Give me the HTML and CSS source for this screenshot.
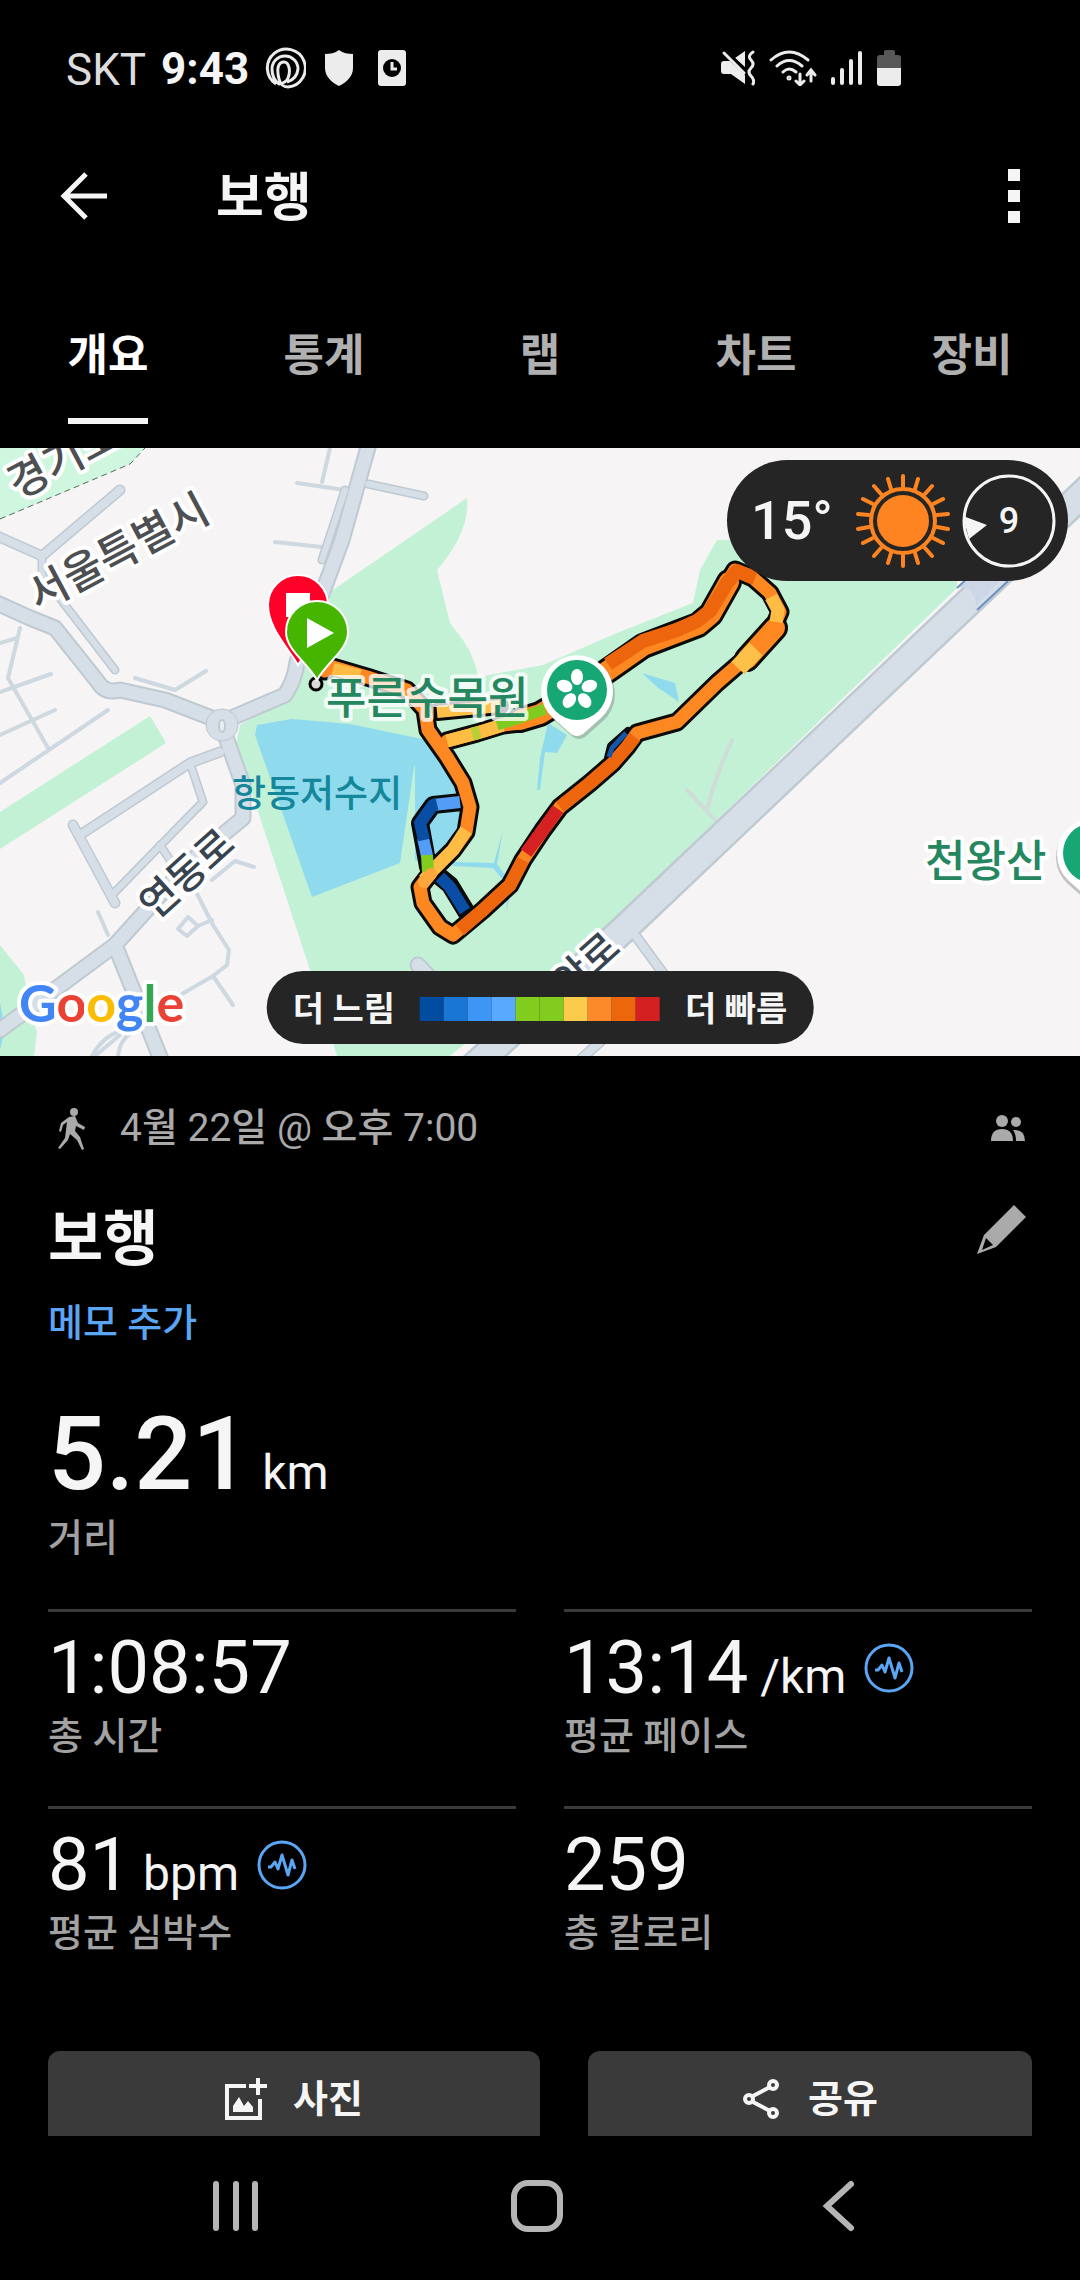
FILE: index.html
```html
<!DOCTYPE html>
<html lang="ko">
<head>
<meta charset="utf-8">
<meta name="viewport" content="width=device-width, initial-scale=1">
<title>보행</title>
<link rel="stylesheet" href="styles.css">
</head>
<body>
<header>
  <div class="status">
    <div class="status-left">
      <span class="carrier">SKT</span>
      <time class="clock">9:43</time>
      <svg class="st-rings" width="42" height="42" viewBox="0 0 42 42" fill="none" stroke="#ececec" stroke-width="3"><path d="M12 37A19 19 0 1 1 24 40Q17 40 15 32C12 20 15 15 20 15S27 24 24 31Q22 36 15 37Q8 32 8 22A13 13 0 0 1 34 22Q33 32 23 35"/></svg>
      <svg class="st-shield" width="28" height="36" viewBox="0 0 28 36" fill="#ececec"><path d="M14 0C18 3 23 4 28 4V18C28 26 22 32 14 36C6 32 0 26 0 18V4C5 4 10 3 14 0Z"/></svg>
      <svg width="28" height="36" viewBox="0 0 28 36"><rect width="28" height="36" rx="3" fill="#ececec"/><circle cx="14" cy="18" r="9"/><path d="M14 12V19H19" fill="none" stroke="#ececec" stroke-width="3"/></svg>
    </div>
    <div class="status-right">
      <svg width="34" height="36" viewBox="0 0 34 36" fill="#ececec"><path d="M0 14Q0 11 3 11H9L24 25V34L10 24H3Q0 24 0 21ZM14 8L24 1V17Z"/><path d="M5 1L26 22" stroke="#000" stroke-width="3"/><path d="M3 3L23 23" stroke="#ececec" stroke-width="3" stroke-linecap="round"/><path d="M32 2Q26 6 30 10T30 18T30 26T32 34" fill="none" stroke="#ececec" stroke-width="3" stroke-linecap="round"/></svg>
      <svg width="48" height="36" viewBox="0 0 48 36" fill="none" stroke="#ececec" stroke-width="3" stroke-linecap="round"><path d="M2 10Q20 -6 39 10M8 16Q20 5 33 16M14 22Q20 16 27 22M31 24V34M27 31L31 35L35 31M42 31V21M38 25L42 20L46 25"/><circle cx="20" cy="28" r="1"/></svg>
      <svg width="32" height="36" viewBox="0 0 32 36" stroke="#ececec" stroke-width="4" stroke-linecap="round"><path d="M2 29V33M11 20V33M20 11V33M29 3V33"/></svg>
      <svg class="st-battery" width="24" height="36" viewBox="0 0 24 36"><path d="M7 5V2Q7 0 9 0H16Q18 0 18 2V5H21Q24 5 24 8V18H0V8Q0 5 3 5Z" fill="#575757"/><path d="M0 18H24V33Q24 36 21 36H3Q0 36 0 33Z" fill="#ececec"/></svg>
    </div>
  </div>
  <div class="appbar">
    <button class="icon-btn" aria-label="뒤로"><svg width="48" height="48" viewBox="0 0 48 48" fill="none" stroke="#f5f5f5" stroke-width="5"><path d="M47 24H4M26 2L4 24L26 46"/></svg></button>
    <h1>보행</h1>
    <button class="icon-btn" aria-label="더보기"><svg width="12" height="54" viewBox="0 0 12 54" fill="#f5f5f5"><path d="M0 0H12V12H0ZM0 21H12V33H0ZM0 42H12V54H0Z"/></svg></button>
  </div>
  <nav class="tabs">
    <a class="active" href="#overview">개요</a>
    <a href="#stats">통계</a>
    <a href="#laps">랩</a>
    <a href="#charts">차트</a>
    <a href="#gear">장비</a>
  </nav>
</header>

<main id="overview">
  <section class="map">
    <svg class="map-canvas" viewBox="0 448 1080 608" preserveAspectRatio="xMidYMid slice">
      <rect y="448" width="1080" height="608" fill="#f6f4f5"/>
      <g fill="#c2f1d5">
        <path fill="#cff7df" d="M0 448H145L130 464L0 519Z"/>
        <path d="M0 812L150 716L166 743L0 849Z"/>
        <path d="M0 945L24 975L30 1012L37 1032L34 1056H0Z"/>
        <path d="M330 592L467 498Q470 532 437 570L450 623L463 640Q476 660 478 677L543 665L617 633L693 603L700 570L717 540H957V588L603 930L450 1056H337L310 970L236 744L240 725L290 697L300 650Z"/>
      </g>
      <g fill="#90daee">
        <path d="M255 735L257 725L292 719L350 724L427 740L414 767L400 863L312 897Z"/>
        <path d="M415 738L440 742L462 790L466 835L430 866L415 860Z"/>
        <path d="M642 673L675 683L679 702L657 687Z"/>
        <path d="M548 723L567 735L557 753L545 752L540 790H537L540 758Z"/>
        <path d="M453 862L494 863L503 830L497 864L512 885L506 913L508 886L493 868L453 866Z"/>
        <path d="M0 1003L5 1030L0 1050Z"/>
      </g>
      <path d="M0 519L130 464L145 448" fill="none" stroke="#526b60" stroke-width="1" stroke-dasharray="6 4"/>
      <g fill="none" stroke="#ced8e1" stroke-width="4" stroke-linecap="round" stroke-linejoin="round">
        <path d="M20 628L8 678L48 748M0 643L17 638M0 692L51 674M0 735L55 710M0 783L108 710M135 678L175 690L206 671M330 448L322 482M297 483L345 490M275 542L322 547M98 912L108 935M195 890L213 925L229 950L227 965L213 976L182 994M213 976L233 1005M188 917L198 926L187 936L178 929ZM198 926L212 920M212 880L235 861L254 867M95 1056L120 1035"/>
        <path stroke="#cfdcd9" d="M732 740Q712 785 708 808M687 790L717 822"/>
      </g>
      <g fill="none" stroke-linecap="round" stroke-linejoin="round">
        <g id="streets" stroke="#bfc9d1">
          <path class="lane-s" d="M42 556V575L115 670M368 484L424 496M190 763L203 802L195 810L112 895M160 845L170 860M345 490L322 560"/>
          <path class="lane-m" d="M-5 535L42 556L120 490M220 752L190 763L80 835M73 825L115 903M635 935L668 980L580 1060"/>
          <path class="lane-l" d="M-5 602L30 618L55 628L98 682Q105 694 120 690L165 700L222 722L285 695Q295 680 297 662L342 540L370 440M222 726L243 785V818L190 862L115 945L0 1030M115 945L162 1062M418 965L430 978"/>
          <path class="lane-xl" d="M1090 487L625 928L470 1070"/>
        </g>
        <g stroke="#d6dfe7">
          <path stroke-width="6" d="M42 556V575L115 670M368 484L424 496M190 763L203 802L195 810L112 895M160 845L170 860M345 490L322 560"/>
          <path stroke-width="8" d="M-5 535L42 556L120 490M220 752L190 763L80 835M73 825L115 903M635 935L668 980L580 1060"/>
          <path stroke-width="13" d="M-5 602L30 618L55 628L98 682Q105 694 120 690L165 700L222 722L285 695Q295 680 297 662L342 540L370 440M222 726L243 785V818L190 862L115 945L0 1030M115 945L162 1062M418 965L430 978"/>
          <path stroke-width="25" d="M1090 487L625 928L470 1070"/>
          <path stroke-width="4" stroke="#ced8e1" d="M92 1056Q104 1034 125 1030M118 1056Q120 1040 130 1034"/>
        </g>
      </g>
      <path d="M958 587L975 575H1006L976 606Q976 588 958 587Z" fill="#ccd6e6"/>
      <path d="M957 588L970 576M977 610L1008 581" stroke="#6f90c4" stroke-width="2"/>
      <circle cx="222" cy="725" r="16" fill="#d6dfe7" stroke="#bfc9d1"/>
      <ellipse cx="222" cy="726" rx="3" ry="6" fill="#e9eef1" stroke="#bfc9d1" stroke-width="2"/>

      <g fill="none" stroke-linejoin="round" stroke-linecap="round">
        <g stroke="#0b0b0b">
          <path stroke-width="18" d="M462 802L433 805L420 823L425 850L428 867L450 885L467 913M437 712L500 706"/>
          <path stroke-width="19" d="M325 671L333 667L367 677L407 690L425 710L428 730L447 757L463 783L470 807L466 832L453 850L433 870L420 887L423 903L440 927L453 935L483 910L510 885L523 860L543 830L560 807L590 783L613 763L627 747L637 733L677 722L717 683L747 657L773 628L780 612L770 593L753 578L735 570L727 583L713 610L700 623L677 632L643 643L613 663L577 690L537 717L520 723L503 725L477 733L447 741"/>
          <path stroke-width="26" d="M729 582L711 614L698 625L677 633L643 646L613 667L577 692L540 714L520 720M775 628L747 659"/>
          <path stroke-width="8" d="M628 731L611 746L608 758"/>
        </g>
        <g stroke="#fd8821" stroke-width="13">
          <path d="M325 671L333 667L367 677L407 690L425 710L428 730L447 757L463 783L470 807L466 832L453 850L433 870L420 887L423 903L440 927L453 935L483 910L510 885L523 860L543 830L560 807L590 783L613 763L627 747L637 733L677 722L717 683L747 657L773 628L780 612L770 593L753 578L735 570L727 583M520 723L503 725L477 733L447 741"/>
          <path stroke-width="20" d="M729 582L711 614L698 625L677 633L643 646L613 667L577 692L540 714L520 720M775 628L747 659"/>
          <g stroke-linecap="butt">
            <path stroke="#fdbd45" d="M333 669L360 676M466 830L453 850L433 870L424 880M447 741L477 733L503 725M776 622L778 610L771 597"/>
            <path stroke="#fdc14a" stroke-width="18" d="M738 668L756 649"/>
            <path stroke="#ed660d" d="M460 930L483 910L510 885L523 860M560 807L590 783L613 763L627 747L635 737"/>
            <path stroke="#ed660d" stroke-width="14" d="M755 578L737 571L727 583L710 611L697 621L677 630L643 641L608 664"/>
            <path stroke="#d52121" d="M526 853L543 830L558 809"/>
            <path stroke="#7fcb21" d="M497 725L520 718L545 709" stroke-width="11"/>
            <path stroke="#b8cf35" d="M472 734L480 732"/>
          </g>
        </g>
        <g stroke-width="12" stroke-linecap="butt">
          <path stroke="#fdc14a" d="M437 712L500 706"/>
          <path stroke="#539df7" d="M460 802L433 805M423 838L427 856"/>
          <path stroke="#0a4da5" stroke-linejoin="round" d="M437 804L433 805L420 823L424 840M440 877L450 887L465 911"/>
          <path stroke="#82cc1f" d="M427 855L428 872"/>
          <path stroke="#1457aa" stroke-width="5" d="M626 733L612 748L609 757"/>
        </g>
        <path stroke="#fda63d" stroke-width="12" d="M424 882L431 874"/>
        <circle cx="316" cy="684" r="6" fill="#d9d9d9" stroke="#000" stroke-width="3"/>
      </g>

      <g font-family="Roboto, 'Noto Sans CJK KR', sans-serif" font-weight="500" stroke="#fff" stroke-width="8" stroke-linejoin="round" paint-order="stroke">
        <g font-size="43" fill="#4d4f52">
          <text transform="translate(38 612) rotate(-28)">서울특별시</text>
          <text transform="translate(18 500) rotate(-28)">경기도</text>
        </g>
        <g font-size="40" fill="#37434f">
          <text transform="translate(155 921) rotate(-42)">연동로</text>
          <text transform="translate(568 1000) rotate(-42)">안로</text>
        </g>
        <g font-size="44" fill="#25875f">
          <text x="326" y="714" stroke-opacity=".8">푸른수목원</text>
          <text x="925" y="877">천왕산</text>
        </g>
        <text x="232" y="807" font-size="37" fill="#14879b" stroke="none">항동저수지</text>
        <text x="19" y="1022" font-family="Lato, sans-serif" font-size="52" font-weight="700"><tspan fill="#4285f4">G</tspan><tspan fill="#ea4335">o</tspan><tspan fill="#fbbc04">o</tspan><tspan fill="#4285f4">g</tspan><tspan fill="#34a853">l</tspan><tspan fill="#ea4335">e</tspan></text>
      </g>

      <g id="pins">
        <path d="M298 665C288 648 268 628 268 605A30 30 0 0 1 328 605C328 628 308 648 298 665Z" fill="#ff0029" stroke="#fff" stroke-width="2"/>
        <rect x="286" y="593" width="24" height="24" fill="#fff"/>
        <path d="M317 680C307 662 286 650 286 632A31 31 0 0 1 348 632C348 650 327 662 317 680Z" fill="#45b500" stroke="#fff" stroke-width="2"/>
        <path d="M307 618V648L334 633Z" fill="#fff"/>
      </g>
      <g id="places">
        <g transform="translate(577 690)">
          <path d="M-24 28A36 36 0 1 1 24 28L6 44Q0 48 -6 44Z" fill="#777" opacity=".4" transform="translate(2 3)"/>
          <path d="M-24 28A36 36 0 1 1 24 28L6 44Q0 48 -6 44Z" fill="#fff"/>
          <circle r="30" fill="#17a775"/>
          <g fill="#fff"><ellipse cy="-13" rx="6" ry="8"/><ellipse cy="-13" rx="6" ry="8" transform="rotate(72)"/><ellipse cy="-13" rx="6" ry="8" transform="rotate(144)"/><ellipse cy="-13" rx="6" ry="8" transform="rotate(216)"/><ellipse cy="-13" rx="6" ry="8" transform="rotate(288)"/></g>
        </g>
        <g transform="translate(1093 853)">
          <path d="M-24 28A36 36 0 1 1 24 28L6 44Q0 48 -6 44Z" fill="#777" opacity=".4" transform="translate(-1 3)"/>
          <path d="M-24 28A36 36 0 1 1 24 28L6 44Q0 48 -6 44Z" fill="#fff"/>
          <circle r="30" fill="#17a775"/>
        </g>
      </g>
    </svg>

    <div class="weather">
      <span class="temp">15°</span>
      <svg width="94" height="94" viewBox="-47 -47 94 94">
        <circle r="26" fill="#fd8420"/><circle r="32" fill="none" stroke="#fd8420" stroke-width="4"/>
        <path id="rays" fill="none" stroke="#fd8420" stroke-width="4" stroke-linecap="round" d="M0 -34V-45M0 34V45M12 -32L15 -42M-12 -32L-15 -42M12 32L15 42M-12 32L-15 42M22 -27L29 -35M-22 -27L-29 -35M22 27L29 35M-22 27L-29 35M30 -17L40 -22M-30 -17L-40 -22M30 17L40 22M-30 17L-40 22M34 -6L45 -7M-34 -6L-45 -7M34 6L45 8M-34 6L-45 8"/>
      </svg>
      <span class="wind">
        <svg width="94" height="94" viewBox="-47 -47 94 94"><circle r="45" fill="none" stroke="#f5f5f5" stroke-width="3"/><path d="M-46 -5L-22 4L-40 18Z" fill="#f5f5f5"/></svg>
        <span class="wind-value">9</span>
      </span>
    </div>

    <div class="legend">
      <span>더 느림</span>
      <span class="scale"><i class="c1"></i><i class="c2"></i><i class="c3"></i><i class="c4"></i><i class="c5"></i><i class="c5"></i><i class="c6"></i><i class="c7"></i><i class="c8"></i><i class="c9"></i></span>
      <span>더 빠름</span>
    </div>
  </section>

  <section class="details">
    <div class="meta">
      <svg width="48" height="44" viewBox="0 0 48 44" fill="#aaa"><circle cx="26" cy="6" r="4"/><path d="M21 11L27 10L30 17L37 21L36 24L28 20L27 25L32 31L36 43L34 44L29 34L22 28L20 34L12 43L10 42L17 32L19 16L15 19L13 26L11 25L13 17Z"/></svg>
      <time>4<b>월</b> 22<b>일</b> @ <b>오후</b> 7:00</time>
      <svg class="people" width="36" height="28" viewBox="0 0 36 28" fill="#aaa"><circle cx="12" cy="7" r="6"/><circle cx="26" cy="8" r="5"/><path d="M1 27Q1 15 12 15T23 27ZM23 16Q35 15 35 27H26Q26 20 23 16Z"/></svg>
    </div>
    <div class="title-row">
      <h2>보행</h2>
      <button class="icon-btn" aria-label="편집"><svg width="52" height="52" viewBox="0 0 52 52"><path d="M38 1L50 13L20 43L1 50L8 31Z" fill="#aaa"/><path d="M10 34L17 41L6 46Z"/></svg></button>
    </div>
    <a class="memo" href="#memo">메모 추가</a>

    <div class="distance">
      <p class="hero">5.21<span class="unit"> km</span></p>
      <p class="label">거리</p>
    </div>
    <div class="grid">
      <div class="cell"><p class="value"><span>1:08:57</span></p><p class="label">총 시간</p></div>
      <div class="cell"><p class="value"><span>13:14<span class="unit"> /km</span></span>
        <svg width="50" height="50" viewBox="0 0 50 50" fill="none" stroke="#5ba5f5" stroke-width="3"><circle cx="25" cy="25" r="23"/><path d="M11 27H14L18 22L21 29L25 15L31 35L35 20L38 29" stroke-linejoin="round"/></svg></p><p class="label">평균 페이스</p></div>
      <div class="cell"><p class="value"><span>81<span class="unit"> bpm</span></span>
        <svg width="50" height="50" viewBox="0 0 50 50" fill="none" stroke="#5ba5f5" stroke-width="3"><circle cx="25" cy="25" r="23"/><path d="M11 27H14L18 22L21 29L25 15L31 35L35 20L38 29" stroke-linejoin="round"/></svg></p><p class="label">평균 심박수</p></div>
      <div class="cell"><p class="value"><span>259</span></p><p class="label">총 칼로리</p></div>
    </div>
    <div class="actions">
      <button class="photo"><svg width="42" height="42" viewBox="0 0 42 42" fill="none" stroke="#f5f5f5" stroke-width="4"><path d="M21 8H2V40H35V21"/><path d="M33 0V17M24 8H42"/><path d="M8 34V28L14 19L19 28L23 23L28 29V34Z" fill="#f5f5f5" stroke="none"/></svg>사진</button>
      <button class="share"><svg width="40" height="42" viewBox="0 0 40 42" fill="none" stroke="#f5f5f5" stroke-width="4"><circle cx="7" cy="21" r="4"/><circle cx="31" cy="7" r="4"/><circle cx="31" cy="35" r="4"/><path d="M11 18L28 9M11 24L28 33"/></svg>공유</button>
    </div>
  </section>
</main>

<nav class="sysnav">
  <button aria-label="최근 앱"><svg width="50" height="54" viewBox="0 0 50 54" stroke="#b5b5b5" stroke-width="6" stroke-linecap="round"><path d="M5 5V49M25 5V49M44 5V49"/></svg></button>
  <button aria-label="홈"><svg width="54" height="54" viewBox="0 0 54 54"><rect x="4" y="4" width="46" height="46" rx="14" fill="none" stroke="#b5b5b5" stroke-width="6"/></svg></button>
  <button aria-label="이전"><svg width="34" height="54" viewBox="0 0 34 54" fill="none" stroke="#b5b5b5" stroke-width="6" stroke-linecap="round"><path d="M29 5L5 27L29 49"/></svg></button>
</nav>
</body>
</html>
```
FILE: styles.css
```css
* { box-sizing: border-box; }

body {
  margin: 0;
  height: 100vh;
  display: flex;
  flex-direction: column;
  background: #000;
  color: #f5f5f5;
  font-family: Roboto, "Noto Sans CJK KR", sans-serif;
}

h1, h2, p { margin: 0; }
svg { display: block; flex: none; }
a { text-decoration: none; }

button {
  margin: 0;
  padding: 0;
  border: 0;
  background: none;
  color: inherit;
  font: inherit;
}

/* status bar */
.status {
  display: flex;
  justify-content: space-between;
  padding: 40px 179px 0 66px;
  height: 98px;
}
.status-left, .status-right { display: flex; align-items: center; height: 56px; }
.status-left { gap: 15px; }
.status-right { gap: 14px; }
.carrier { font-size: 44px; line-height: 56px; color: #ddd; padding-top: 4px; }
.clock { font-size: 44px; line-height: 56px; font-weight: 700; padding-top: 2px; }
.st-shield { margin: 0 10px 0 4px; }

/* app bar */
.appbar {
  display: flex;
  align-items: center;
  height: 196px;
  padding: 0 60px;
}
.appbar h1 {
  flex: 1;
  margin-left: 108px;
  padding-top: 6px;
  font-size: 52px;
  line-height: 64px;
  font-weight: 700;
}

/* tabs */
.tabs { display: grid; grid-template-columns: repeat(5, 1fr); justify-items: center; height: 154px; }
.tabs a {
  height: 130px;
  padding-top: 32px;
  font-size: 44px;
  line-height: 60px;
  font-weight: 700;
  color: #b0b0b0;
}
.tabs .active { color: #fff; border-bottom: 6px solid #f5f5f5; }

main { flex: 1; min-height: 0; overflow: hidden; }

/* map */
.map { position: relative; aspect-ratio: 1080 / 608; overflow: hidden; }
.map-canvas { width: 100%; height: 100%; }
.lane-s { stroke-width: 9px; }
.lane-m { stroke-width: 11px; }
.lane-l { stroke-width: 17px; }
.lane-xl { stroke-width: 30px; }

.weather, .legend { position: absolute; display: flex; align-items: center; background: #252525; }
.weather {
  top: 12px;
  right: 12px;
  height: 121px;
  padding: 0 12px 0 24px;
  gap: 12px;
  border-radius: 61px;
}
.temp { margin-right: 11px; font-size: 54px; line-height: 64px; font-weight: 500; }
.wind { display: grid; place-items: center; }
.wind > * { grid-area: 1 / 1; }
.wind-value { font-size: 36px; line-height: 40px; font-weight: 500; }

.legend {
  left: 50%;
  bottom: 12px;
  transform: translateX(-50%);
  gap: 25px;
  height: 73px;
  padding: 2px 26px 0;
  border-radius: 37px;
  font-size: 34px;
  line-height: 48px;
  font-weight: 700;
  white-space: nowrap;
}
.scale { display: flex; }
.scale i { width: 24px; height: 24px; }
.c1 { background: #004ca1; }
.c2 { background: #1976d2; }
.c3 { background: #3d96f5; }
.c4 { background: #58aaff; }
.c5 { background: #82cc1f; }
.c6 { background: #fbcb4c; }
.c7 { background: #fd8a2a; }
.c8 { background: #ec660d; }
.c9 { background: #d42020; }

/* details */
.details { padding: 36px 48px 0; }
.meta {
  display: flex;
  align-items: center;
  height: 72px;
  gap: 24px;
  color: #aaa;
  font-size: 39px;
  line-height: 48px;
}
.meta b { font-weight: 500; }
.people { margin-left: auto; margin-right: 6px; }
.title-row { display: flex; justify-content: space-between; align-items: flex-start; margin-top: 40px; }
.title-row .icon-btn { margin-right: 4px; }
h2 { font-size: 60px; line-height: 72px; font-weight: 700; }
.memo {
  display: inline-block;
  margin-top: 23px;
  font-size: 38px;
  line-height: 48px;
  font-weight: 500;
  color: #5ba5f5;
  vertical-align: top;
}
.distance { margin: 47px 0; }
.hero { font-size: 102px; line-height: 120px; font-weight: 500; }
.unit { font-size: 48px; line-height: 48px; font-weight: 400; }
.label { font-size: 38px; line-height: 48px; font-weight: 500; color: #a2a2a2; }
.grid { display: grid; grid-template-columns: 1fr 1fr; column-gap: 48px; }
.cell { padding: 12px 0 46px; border-top: 3px solid #3a3a3a; }
.value { display: flex; align-items: center; gap: 18px; font-size: 74px; line-height: 88px; }

.actions { display: flex; gap: 48px; margin-top: 48px; }
.actions button {
  display: flex;
  align-items: center;
  justify-content: center;
  gap: 26px;
  height: 96px;
  border-radius: 12px;
  background: #3a3a3a;
  font-size: 38px;
  line-height: 48px;
  font-weight: 700;
}
.photo { flex: 41; }
.share { flex: 37; }

/* system navigation */
.sysnav { display: grid; grid-template-columns: repeat(3, 1fr); flex: none; height: 144px; padding: 0 90px 4px 85px; }
.sysnav button { display: grid; place-items: center; }
```
